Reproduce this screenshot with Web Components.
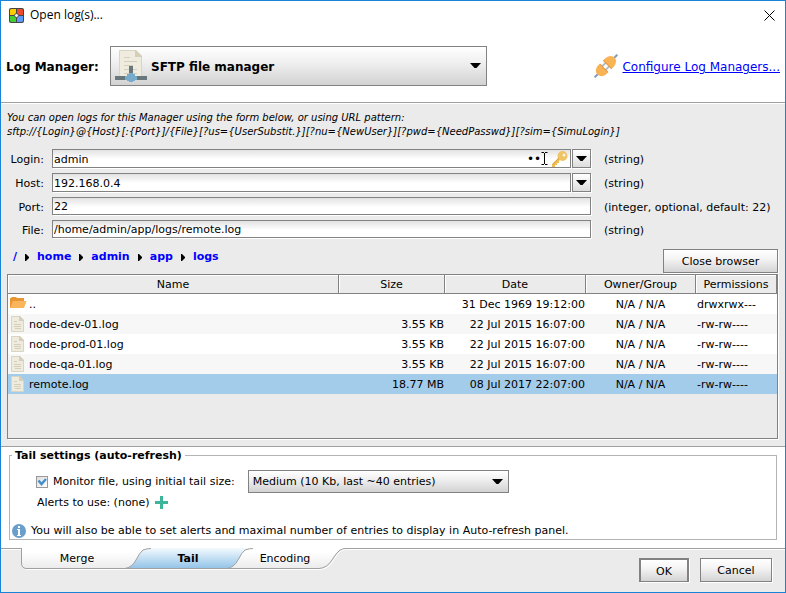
<!DOCTYPE html>
<html lang="en">
<head>
<meta charset="utf-8">
<title>Open log(s)...</title>
<style>
  html, body { margin: 0; height: 100%; }
  body { font: 11px/14px "DejaVu Sans", Verdana, sans-serif; color: #000; background: #fff; }
</style>
</head>
<body>
<log-dialog></log-dialog>

<script>
const define = (name, html, setup) => {
  const tpl = document.createElement('template');
  tpl.innerHTML = '<style>*{box-sizing:border-box}:host{box-sizing:border-box}button,input,select{font:inherit;color:inherit;margin:0}button:focus-visible,select:focus-visible{outline:1px dotted #444;outline-offset:-4px}</style>' + html;
  customElements.define(name, class extends HTMLElement {
    constructor() {
      super();
      this.attachShadow({ mode: 'open' }).append(tpl.content.cloneNode(true));
    }
    connectedCallback() {
      if (setup && !this.ready) { this.ready = true; setup(this, this.shadowRoot); }
    }
  });
};

const ARROW = '<svg class="arrow" width="11" height="6" viewBox="0 0 11 6" aria-hidden="true"><path d="M0 0h11L6.500 5h-2z"/></svg>';
const PAGE = '<svg width="14" height="16" viewBox="0 0 14 16" aria-hidden="true"><path d="M1.500.5h8l4 4v11h-12z" fill="#efecdf" stroke="#d9d5c0"/><path d="M9 0h1l4 4v1H9z" fill="#d3cfb8"/><path d="M4 5.500h3M4 8.500h7M4 10.500h7M5 12.500h6" stroke="#d3cfb8"/></svg>';
const FOLDER = '<svg width="17" height="14" viewBox="0 0 17 14" aria-hidden="true"><path d="M0 2h1l1-1h4l1 1h7v10H0z" fill="#e89535"/><path d="M0 12 3 5h13.500L14 12z" fill="#f9b45c"/></svg>';

define('ui-button', `
  <style>
    :host { display: block; }
    button { display: block; width: 100%; height: 100%; padding: 2px 4px 0; border: 1px solid #828282; border-radius: 0;
      background: linear-gradient(#fff, #f4f4f4 40%, #d4d4d4); box-shadow: 1px 1px #fff; }
    :host([primary]) button { border-width: 2px 2px 1px 2px; }
  </style>
  <button type="button"><slot></slot></button>`);

define('ui-select', `
  <style>
    :host { display: grid; align-items: center; height: 23px; border: 1px solid #828282;
      background: linear-gradient(#fff, #f0f0f0 40%, #d2d2d2); }
    select, .arrow, .icon { grid-area: 1 / 1; }
    select { width: 100%; height: 100%; appearance: none; border: 0; border-radius: 0; background: none;
      padding: 1px 24px 0 var(--inset, 4px); }
    .arrow { justify-self: end; margin-right: 5px; pointer-events: none; }
    .icon { justify-self: start; padding-left: 4px; pointer-events: none; }
    .icon ::slotted(svg) { display: block; }
  </style>
  <select></select><span class="icon"><slot></slot></span>${ARROW}`,
  (host, root) => {
    const select = root.querySelector('select');
    select.setAttribute('aria-label', host.getAttribute('label'));
    select.add(new Option(host.getAttribute('value')));
  });

define('title-bar', `
  <style>
    :host { display: flex; align-items: center; gap: 6px; height: 28px; padding: 0 8px; }
    h1 { flex: 1; margin: 0; font: 12px/16px "Open Sans", "Noto Sans", sans-serif; }
    svg { display: block; }
    button { padding: 2px; border: 0; background: none; }
  </style>
  <svg width="15" height="15" viewBox="0 0 15 15" aria-hidden="true">
    <rect width="15" height="15" rx="2" fill="#444"/>
    <path d="M2 1h5v6H1V2z" fill="#fc0"/><path d="M8 1h5l1 1v5H8z" fill="#f04a2c"/>
    <path d="M1 8h6v6H2l-1-1z" fill="#4c3"/><path d="M8 8h6v5l-1 1H8z" fill="#5c9aff"/>
    <circle cx="7.500" cy="7.500" r="2" fill="#eee" stroke="#555"/>
  </svg>
  <h1>Open log(s)...</h1>
  <button type="button" aria-label="Close"><svg width="11" height="11" viewBox="0 0 11 11"><path d="M.5.5l10 10M10.500.5l-10 10" stroke="#000" fill="none"/></svg></button>`);

define('manager-header', `
  <style>
    :host { display: flex; align-items: center; height: 74px; padding: 1px 5px 0; font-size: 12px; line-height: 16px;
      border-bottom: 1px solid #a0a0a0; }
    .name { flex: none; width: 104px; padding-top: 2px; font-weight: bold; }
    ui-select { flex: 0 1 377px; height: 40px; font-weight: bold; --inset: 40px; }
    .link { display: flex; align-items: center; gap: 4px; margin-left: auto; }
    a { padding-top: 2px; color: #00f; white-space: nowrap; }
  </style>
  <span class="name">Log Manager:</span>
  <ui-select label="Log Manager" value="SFTP file manager">
    <svg width="32" height="32" viewBox="0 0 32 32" aria-hidden="true">
      <path d="M4.500.5h16l6 6v20h-22z" fill="#efecdf" stroke="#d9d5c0"/>
      <path d="M20 0h1l6 6v1h-7z" fill="#d3cfb8"/>
      <path d="M9 7.500h6M9 11.500h13M9 15.500h9M9 19.500h13M9 23.500h13" stroke="#d3cfb8"/>
      <path d="M14 16h4v8h-4z" fill="#68777c"/><path d="M0 26h32v4H0z" fill="#68777c"/>
      <path d="M14 23h4v1h2v2h2v4h-2v1h-2v1h-4v-1h-2v-1h-2v-4h2v-2h2z" fill="#78aacb"/>
    </svg>
  </ui-select>
  <span class="link">
    <svg width="24" height="24" viewBox="0 0 24 24" aria-hidden="true">
      <g transform="rotate(-45 12 12)">
        <path d="M-4 12h5M23 12h5" stroke="#7f9fba" stroke-width="2"/>
        <path d="M8 9.500h7M8 14.500h7" stroke="#aebdca" stroke-width="2"/>
        <path d="M9 6v12H6Q0 17 0 12t6-6z" fill="#f8b356"/>
        <path d="M14 6v12h3q7-1 7-6t-7-6z" fill="#f8b356"/>
        <path d="M9 6v12M14 6v12" stroke="#e8983c"/>
      </g>
    </svg>
    <a href="#managers">Configure Log Managers...</a>
  </span>`);

define('field-row', `
  <style>
    :host { display: grid; grid-template-columns: 38px minmax(0, 1fr) 174px; align-items: center; height: 18px; }
    :host([dropdown]) { height: 19px; }
    label { text-align: right; padding: 3px 1px 0 0; }
    .hint { padding-top: 3px; }
    .box { display: flex; gap: 1px; height: 100%; min-height: 0; margin: 0 13px 0 7px; }
    .field { flex: 1; min-width: 0; display: flex; align-items: center; border: 1px solid #828282;
      background: linear-gradient(#e2e2e2, #fff 9px); box-shadow: 1px 1px #fff; }
    input { flex: 1; min-width: 0; height: 100%; padding: 1px 1px 0; border: 0; background: none; outline: 0; }
    .field ::slotted(*) { flex: none; }
    button { width: 19px; padding: 0; border: 1px solid #828282; background: linear-gradient(#fff, #ddd); display: none;
      align-items: center; justify-content: center; box-shadow: 1px 1px #fff; }
    :host([dropdown]) button { display: flex; }
  </style>
  <label for="f"></label>
  <span class="box"><span class="field"><input id="f" type="text"><slot></slot></span>
  <button type="button" aria-label="Show choices">${ARROW}</button></span>
  <span class="hint"></span>`,
  (host, root) => {
    root.querySelector('label').textContent = host.getAttribute('label');
    root.querySelector('input').value = host.getAttribute('value');
    root.querySelector('.hint').textContent = host.getAttribute('hint');
  });

define('secret-field', `
  <style>
    :host { display: flex; align-items: center; height: 17px; }
    input { width: 14px; height: 15px; padding: 0; border: 0; background: none; outline: 0; font-size: 12px; }
    svg { display: block; flex: none; }
    .key { margin: 0 2px 0 3px; }
  </style>
  <input type="password" value="••" aria-label="Password">
  <svg width="7" height="13" viewBox="0 0 7 13" aria-hidden="true"><path d="M.500.5H3M4 .5h2.500M3.500 1v11M.500 12.500H3M4 12.500h2.500" stroke="#000" fill="none"/></svg>
  <svg class="key" width="17" height="17" viewBox="0 0 17 17" aria-hidden="true">
    <path d="M8 7 1 14v3h3v-2h2v-2h2v-2l2-2z" fill="#efbd57"/>
    <path fill-rule="evenodd" d="M11.500 1a5 5 0 1 0 0 10 5 5 0 0 0 0-10zm1.500 2.500a1.500 1.500 0 1 1 0 3 1.500 1.500 0 0 1 0-3z" fill="#f1c463"/>
    <path d="M1.500 14.500 8 8" stroke="#dba23a" fill="none"/>
  </svg>`);

define('crumb-trail', `
  <style>
    nav { display: flex; align-items: center; gap: 8px; font-weight: bold; }
    a { color: #00f; text-decoration: none; }
  </style>
  <nav aria-label="Folder"></nav>`,
  (host, root) => {
    root.querySelector('nav').innerHTML = host.getAttribute('path').split(' ')
      .map(p => `<a href="#${p}">${p}</a>`)
      .join('<svg width="4" height="7" viewBox="0 0 4 7" aria-hidden="true"><path d="M0 0h1l3 3v1L1 7H0z"/></svg>');
  });

define('file-table', `
  <style>
    :host { display: block; border: 1px solid #828282; background: #ebebeb; box-shadow: 1px 1px #fff; }
    table { width: 100%; table-layout: fixed; border-collapse: separate; border-spacing: 0; }
    th { height: 19px; padding: 2px 0 0; font-weight: normal; border-right: 1px solid #828282; border-bottom: 1px solid #828282;
      box-shadow: inset 1px 1px #fff; }
    td { height: 20px; padding: 2px 0 0; white-space: nowrap; }
    tbody tr { background: #fff; }
    tbody tr:nth-child(even) { background: #f7f7f7; }
    tbody tr[aria-selected=true] { background: #a3cbea; }
    .file { display: flex; align-items: center; height: 18px; padding-left: 2px; }
    .file i { flex: none; width: 19px; height: 18px; display: flex; }
    .num { text-align: right; padding-right: 1px; }
    .mid { text-align: center; padding-right: 1px; }
    .perm { padding-left: 1px; }
  </style>
  <table>
    <colgroup><col><col style="width:106px"><col style="width:141px"><col style="width:110px"><col style="width:81px"></colgroup>
    <thead><tr><th>Name</th><th>Size</th><th>Date</th><th>Owner/Group</th><th>Permissions</th></tr></thead>
    <tbody></tbody>
  </table>`,
  (host, root) => {
    root.querySelector('tbody').innerHTML = [
      ['..', '', '31 Dec 1969 19:12:00', 'drwxrwx---'],
      ['node-dev-01.log', '3.55 KB', '22 Jul 2015 16:07:00', '-rw-rw----'],
      ['node-prod-01.log', '3.55 KB', '22 Jul 2015 16:07:00', '-rw-rw----'],
      ['node-qa-01.log', '3.55 KB', '22 Jul 2015 16:07:00', '-rw-rw----'],
      ['remote.log', '18.77 MB', '08 Jul 2017 22:07:00', '-rw-rw----']
    ].map(([name, size, date, perm], i) => `<tr aria-selected="${i === 4}">
      <td><span class="file"><i>${i ? PAGE : FOLDER}</i>${name}</span></td>
      <td class="num">${size}</td><td class="num">${date}</td>
      <td class="mid">N/A / N/A</td><td class="perm">${perm}</td></tr>`).join('');
  });

define('tail-settings', `
  <style>
    :host { display: block; padding: 0 8px 8px; background: #fff; }
    fieldset { min-width: 0; margin: 0; padding: 7px 2px 0; border: 1px solid #b4b4b4; }
    legend { padding: 2px 3px 0; font-weight: bold; }
    .row { display: flex; align-items: center; }
    .size { gap: 5px; padding-left: 24px; }
    .alerts { gap: 5px; height: 19px; padding-left: 25px; }
    .note { gap: 5px; height: 16px; margin-top: 11px; }
    input { appearance: none; flex: none; width: 12px; height: 12px; border: 1px solid #999; background: linear-gradient(135deg, #ddd, #fff); }
    .tick { display: grid; }
    .tick > * { grid-area: 1 / 1; }
    .tick svg { visibility: hidden; pointer-events: none; }
    input:checked + svg { visibility: visible; }
    ui-select { flex: 0 1 261px; margin-left: 8px; }
    button { padding: 0; border: 0; background: none; }
    svg { display: block; }
  </style>
  <fieldset>
    <legend>Tail settings (auto-refresh)</legend>
    <div class="row size">
      <span class="tick"><input id="monitor" type="checkbox" checked>
        <svg width="12" height="12" viewBox="0 0 12 12" aria-hidden="true"><path d="M2.500 4.500 5.500 8 10 3" fill="none" stroke="#4690ca" stroke-width="2.500"/></svg></span>
      <label for="monitor">Monitor file, using initial tail size:</label>
      <ui-select label="Initial tail size" value="Medium (10 Kb, last ~40 entries)"></ui-select>
    </div>
    <div class="row alerts"><span>Alerts to use: (none)</span>
      <button type="button" aria-label="Add alert"><svg width="13" height="13" viewBox="0 0 13 13"><path d="M5 0h3v5h5v3H8v5H5V8H0V5h5z" fill="#3cb59b"/></svg></button></div>
    <div class="row note">
      <svg width="14" height="14" viewBox="0 0 14 14" aria-hidden="true"><circle cx="7" cy="7" r="7" fill="#6a9fcb"/><path d="M6 2h2v2H6zM5 5h3v6h1v1H5v-1h1V6H5z" fill="#fff"/></svg>
      <span>You will also be able to set alerts and maximal number of entries to display in Auto-refresh panel.</span>
    </div>
  </fieldset>`);

define('tab-strip', `
  <style>
    :host { display: grid; width: 325px; height: 22px; }
    svg, .tabs { grid-area: 1 / 1; }
    .tabs { display: grid; grid-template-columns: 112px 110px 84px; height: 22px; }
    button { padding: 0; border: 0; background: none; }
    [aria-selected=true] { font-weight: bold; }
  </style>
  <svg width="325" height="22" viewBox="0 0 325 22" aria-hidden="true">
    <defs>
      <linearGradient id="plain" x2="0" y2="1"><stop offset=".2" stop-color="#fff"/><stop offset="1" stop-color="#ebebeb"/></linearGradient>
      <linearGradient id="active" x2="0" y2="1"><stop stop-color="#f4fafe"/><stop offset="1" stop-color="#92c3e8"/></linearGradient>
    </defs>
    <path d="M.5 0V15Q.5 20 5 20.500H298Q306 20 311 12T319 2Q322 .5 325 .5" transform="translate(1 1)" fill="none" stroke="#fff"/>
    <path d="M.5 0H325Q322 .5 319 2T311 12T298 20.500H5Q.5 20 .5 15z" fill="#f6f6f6"/>
    <path d="M.5 0H325Q322 .5 319 2Q315 5 311 12Q306 20 298 20.500H5Q.5 20 .5 15z" fill="url(#plain)"/>
    <path d="M104 20.500Q111 19.500 115 12Q119 4 122 2Q126 .5 130 0H232Q228 .5 224 2Q221 4 217 12Q213 19.500 206 20.500z" fill="url(#active)"/>
    <path d="M.5 0V15Q.5 20 5 20.500H298Q306 20 311 12Q315 5 319 2Q322 .5 325 .5M104 20.500Q111 19.500 115 12Q119 4 122 2Q126 .5 130 .5M206 20.500Q213 19.500 217 12Q221 4 224 2Q228 .5 232 .5" fill="none" stroke="#a0a0a0"/>
  </svg>
  <div class="tabs" role="tablist">
    <button type="button" role="tab" aria-selected="false">Merge</button>
    <button type="button" role="tab" aria-selected="true">Tail</button>
    <button type="button" role="tab" aria-selected="false">Encoding</button>
  </div>`);

define('log-dialog', `
  <style>
    :host { display: flex; flex-direction: column; min-height: 100%; border: 1px solid #1883d7; background: #fff; }
    .form { flex: 1; display: flex; flex-direction: column; margin-top: 1px; padding: 7px 7px 7px 6px; background: #ebebeb;
      border-bottom: 1px solid #a0a0a0; }
    p { margin: 0 0 10px; font-style: italic; font-size: 10px; }
    .fields { display: grid; gap: 5px; }
    .nav { display: flex; align-items: center; justify-content: space-between; padding-left: 6px; margin-top: 11px; }
    crumb-trail { margin-bottom: 8px; }
    .nav ui-button { width: 115px; height: 24px; }
    file-table { flex: 1; margin-top: 1px; }
    footer { display: flex; justify-content: space-between; height: 44px; padding: 0 13px 0 20px; background: #ebebeb;
      box-shadow: inset 0 1px #a0a0a0, inset 0 2px #fff; }
    .actions { display: flex; gap: 11px; padding-top: 10px; }
    .actions ui-button { width: 72px; height: 24px; }
    .actions ui-button[primary] { width: 50px; }
  </style>
  <title-bar></title-bar>
  <manager-header></manager-header>
  <section class="form">
    <p>You can open logs for this Manager using the form below, or using URL pattern:<br>sftp://{Login}@{Host}[:{Port}]/{File}[?us={UserSubstit.}][?nu={NewUser}][?pwd={NeedPasswd}][?sim={SimuLogin}]</p>
    <div class="fields">
      <field-row dropdown label="Login:" value="admin" hint="(string)"><secret-field></secret-field></field-row>
      <field-row dropdown label="Host:" value="192.168.0.4" hint="(string)"></field-row>
      <field-row label="Port:" value="22" hint="(integer, optional, default: 22)"></field-row>
      <field-row label="File:" value="/home/admin/app/logs/remote.log" hint="(string)"></field-row>
    </div>
    <div class="nav"><crumb-trail path="/ home admin app logs"></crumb-trail><ui-button>Close browser</ui-button></div>
    <file-table></file-table>
  </section>
  <tail-settings></tail-settings>
  <footer>
    <tab-strip></tab-strip>
    <div class="actions"><ui-button primary>OK</ui-button><ui-button>Cancel</ui-button></div>
  </footer>`);
</script>
</body>
</html>
